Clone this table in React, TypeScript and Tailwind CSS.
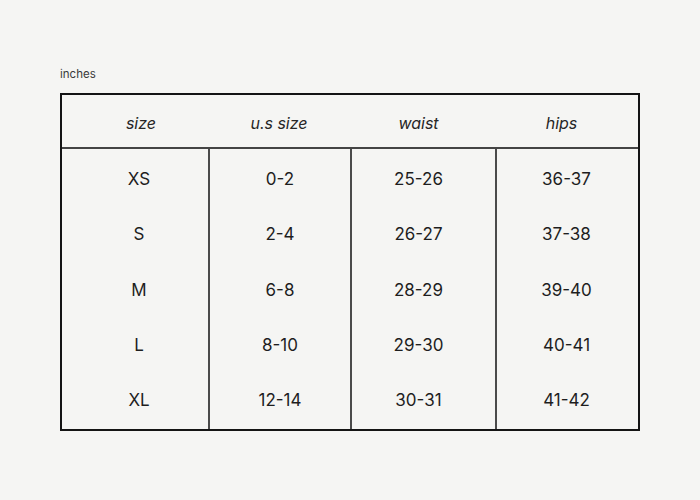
import React from "react";

const rows = [
  ["XS", "0-2", "25-26", "36-37"],
  ["S", "2-4", "26-27", "37-38"],
  ["M", "6-8", "28-29", "39-40"],
  ["L", "8-10", "29-30", "40-41"],
  ["XL", "12-14", "30-31", "41-42"],
];

const colPad = ["pl-[8px]", "", "pr-[10px]", "pr-[2px]"];
const headPad = ["pl-[12px]", "", "pr-[8px]", "pr-[10px]"];

export default function App() {
  return (
    <div
      className="w-[700px] h-[500px] bg-[#f5f5f3] text-[#1e1e1e] pt-[67px] pl-[60px]"
      style={{ fontFamily: "Inter, 'Noto Sans', sans-serif" }}
    >
      <div className="text-[11.5px] leading-[15px] h-[26px] text-[#3a3a3a]">inches</div>
      <div className="w-[580px] border-2 border-[#141414]">
        <div className="grid grid-cols-[146px_142px_145px_143px] h-[54px] border-b-2 border-[#444] pt-[4px]">
          {["size", "u.s size", "waist", "hips"].map((h, i) => (
            <div key={h} className={`flex items-center justify-center italic text-[16px] text-[#262626] ${headPad[i]}`}>
              {h}
            </div>
          ))}
        </div>
        {rows.map((r, ri) => {
          const last = ri === rows.length - 1;
          return (
            <div
              key={ri}
              className={`grid grid-cols-[146px_142px_145px_143px] ${last ? "h-[58px]" : "h-[55.5px]"}`}
            >
              {r.map((c, i) => (
                <div
                  key={i}
                  className={`flex items-center justify-center text-[17px] ${last ? "pt-[2px]" : "pt-[5px]"} ${i > 0 ? "border-l-2 border-[#4a4a4a]" : ""} ${colPad[i]}`}
                >
                  {c}
                </div>
              ))}
            </div>
          );
        })}
      </div>
    </div>
  );
}
